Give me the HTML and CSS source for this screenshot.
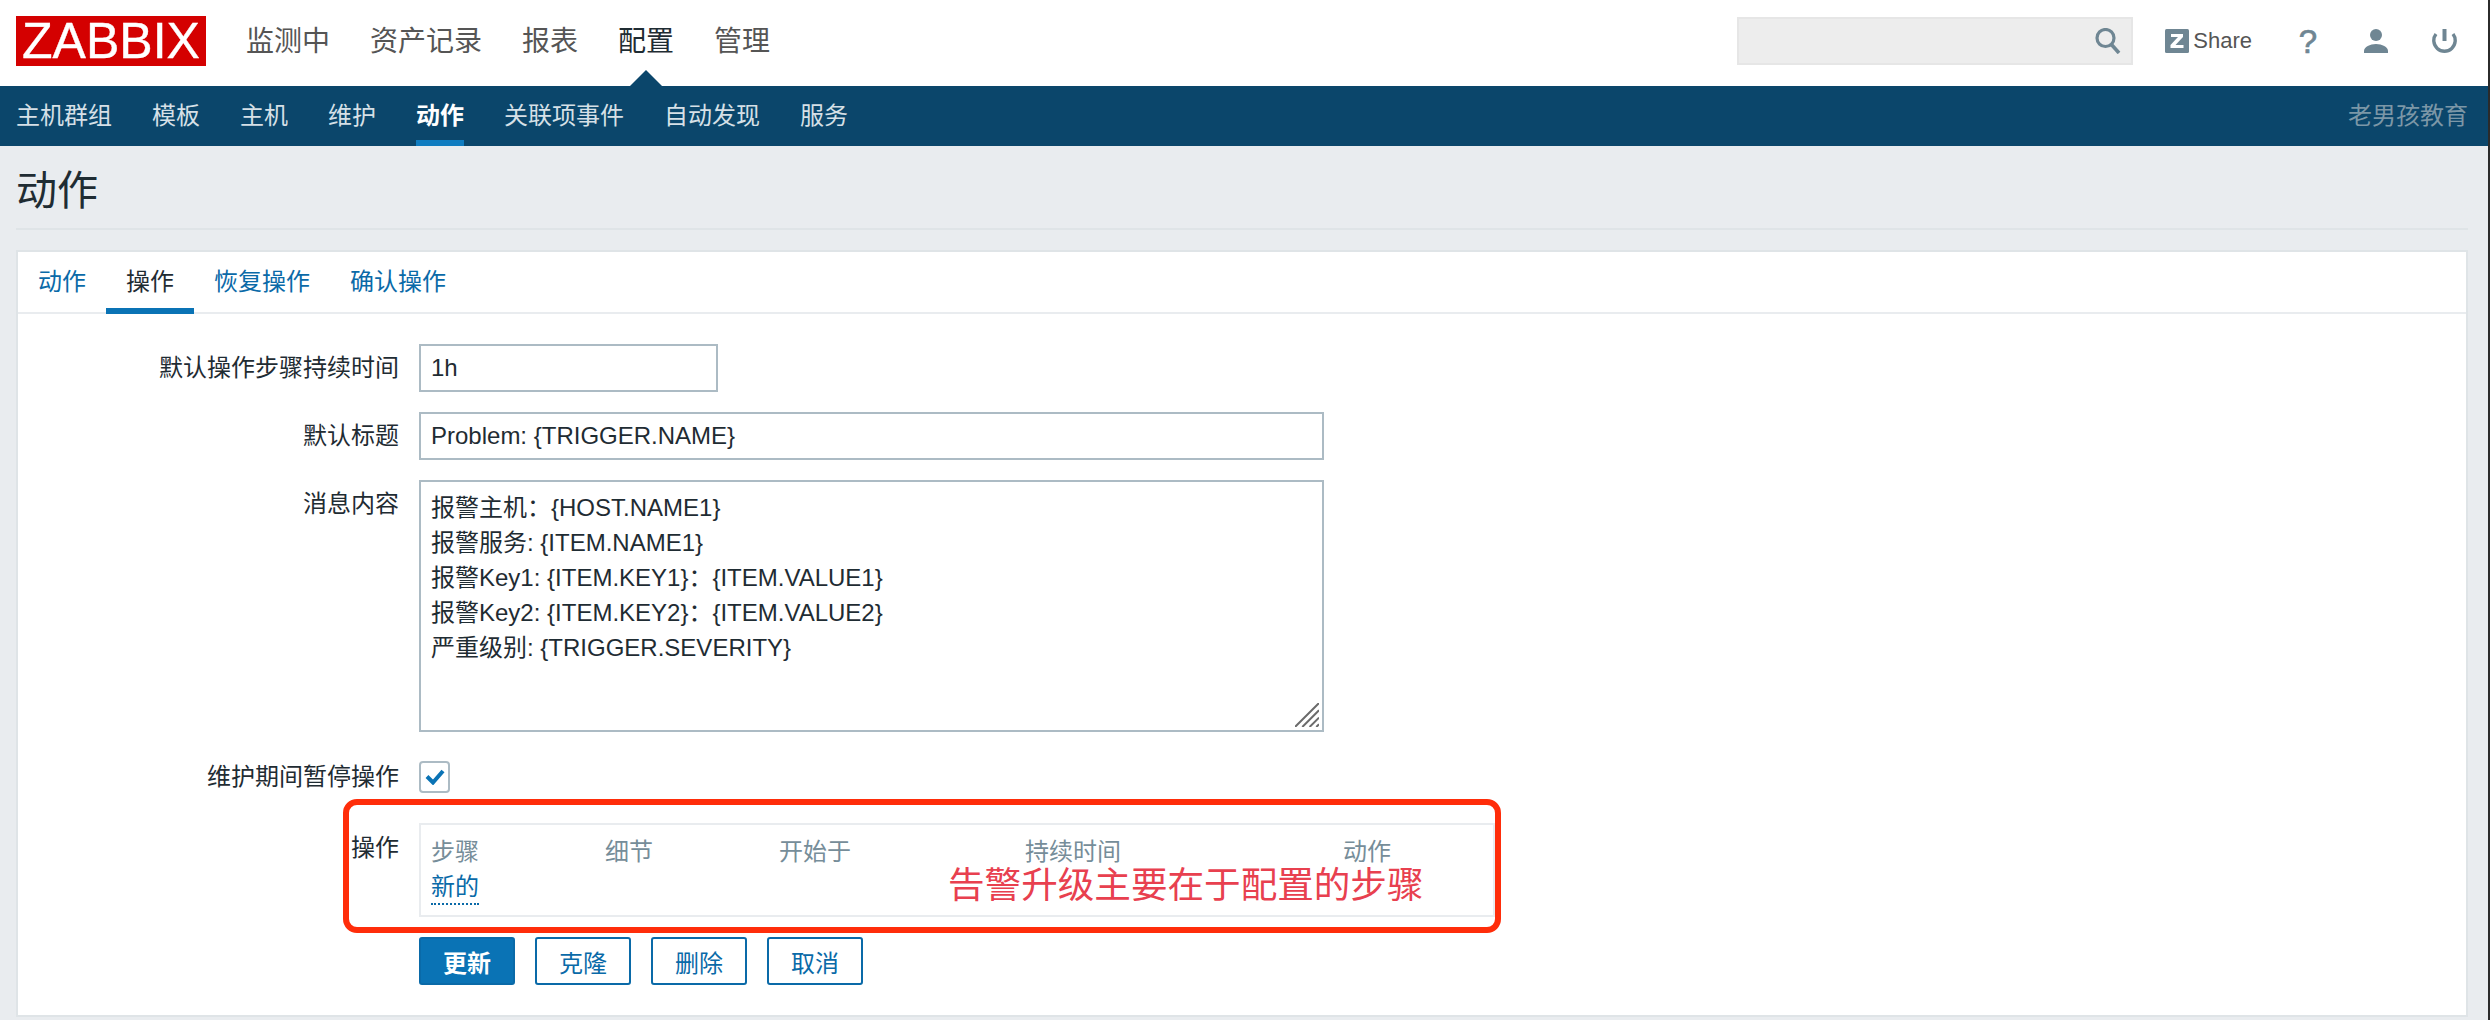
FILE: index.html
```html
<!DOCTYPE html>
<html lang="zh-CN">
<head>
<meta charset="utf-8">
<title>动作</title>
<link rel="stylesheet" href="styles.css">
</head>
<body>
<header class="topbar">
  <div class="logo">ZABBIX</div>
  <nav class="mainnav">
    <a>监测中</a><a>资产记录</a><a>报表</a><a class="active">配置</a><a>管理</a>
  </nav>
  <div class="tools">
    <div class="search">
      <svg class="ico-search" viewBox="0 0 26 26" width="26" height="26"><circle cx="10.500" cy="10" r="8.500" fill="none" stroke="#6f8693" stroke-width="3.200"/><path d="M16 16l8 9" stroke="#6f8693" stroke-width="3.600" fill="none"/></svg>
    </div>
    <div class="share">
      <svg viewBox="0 0 24 24" width="24" height="24"><rect width="24" height="24" rx="1.500" fill="#6f8693"/><path d="M6 5h12v3L10.500 16H18.500v3H5.500v-3L13 8H6z" fill="#fff"/></svg>
      <span>Share</span>
    </div>
    <div class="help">?</div>
    <svg class="ico-user" viewBox="0 0 24 24" width="24" height="24"><circle cx="12" cy="6" r="6" fill="#6f8693"/><path d="M0 24v-2C0 18 6 15 12 15s12 3 12 7v2z" fill="#6f8693"/></svg>
    <svg class="ico-power" viewBox="0 0 25 24" width="25" height="24"><path d="M4 5A10.700 10.700 0 1 0 21 5" fill="none" stroke="#6f8693" stroke-width="3.400"/><path d="M12.500 0v12" stroke="#6f8693" stroke-width="4" fill="none"/></svg>
  </div>
</header>
<div class="subnav">
  <nav class="subnav-links">
    <a>主机群组</a><a>模板</a><a>主机</a><a>维护</a><a class="active">动作</a><a>关联项事件</a><a>自动发现</a><a>服务</a>
  </nav>
  <div class="brand">老男孩教育</div>
</div>
<main class="page">
  <h1 class="title">动作</h1>
  <section class="card">
    <div class="tabs">
      <a>动作</a><a class="active">操作</a><a>恢复操作</a><a>确认操作</a>
    </div>
    <form class="form">
      <label class="lbl">默认操作步骤持续时间</label>
      <div class="field short">1h</div>
      <label class="lbl">默认标题</label>
      <div class="field wide">Problem: {TRIGGER.NAME}</div>
      <label class="lbl lbl-top">消息内容</label>
      <div class="field wide area">
        <div>报警主机：{HOST.NAME1}</div>
        <div>报警服务: {ITEM.NAME1}</div>
        <div>报警Key1: {ITEM.KEY1}：{ITEM.VALUE1}</div>
        <div>报警Key2: {ITEM.KEY2}：{ITEM.VALUE2}</div>
        <div>严重级别: {TRIGGER.SEVERITY}</div>
        <svg class="grip" viewBox="0 0 24 24" width="24" height="24"><path d="M0 24L24 0M7.300 24L24 7.300M14.600 24L24 14.600M21.300 24L24 21.300" stroke="#6b6b6b" stroke-width="2" fill="none"/></svg>
      </div>
      <label class="lbl lbl-check">维护期间暂停操作</label>
      <div class="check-row">
        <div class="check"><svg viewBox="0 0 20 16" width="20" height="16"><path d="M2 7.500l6 6L18 2" fill="none" stroke="#0a73b5" stroke-width="4"/></svg></div>
      </div>
      <label class="lbl lbl-ops">操作</label>
      <div class="ops">
        <div class="ops-head"><span class="c1">步骤</span><span class="c2">细节</span><span class="c3">开始于</span><span class="c4">持续时间</span><span class="c5">动作</span></div>
        <a class="new">新的</a>
        <div class="note">告警升级主要在于配置的步骤</div>
      </div>
      <div class="buttons">
        <button type="button" class="btn primary">更新</button>
        <button type="button" class="btn">克隆</button>
        <button type="button" class="btn">删除</button>
        <button type="button" class="btn">取消</button>
      </div>
    </form>
    <div class="callout"></div>
  </section>
</main>
</body>
</html>
```
FILE: styles.css
```css
* { box-sizing: border-box; }
html, body { margin: 0; height: 1020px; overflow: hidden; }
html { background: #2b2b2b; }
body {
  background: #e9ecef;
  font-family: "Liberation Sans", "Noto Sans CJK SC", sans-serif;
  font-size: 24px;
  color: #1f2c33;
  width: 2488px;
}
a { text-decoration: none; }

.topbar {
  height: 86px;
  background: #fff;
  display: flex;
  align-items: flex-start;
  padding-left: 16px;
}
.logo {
  width: 190px;
  height: 50px;
  margin-top: 16px;
  background: #d40000;
  color: #fff;
  font-size: 50px;
  line-height: 50px;
  text-align: center;
  -webkit-text-stroke: 0.4px #fff;
}
.mainnav {
  display: flex;
  gap: 40px;
  margin-left: 40px;
  margin-top: 22px;
  font-size: 28px;
  line-height: 40px;
  color: #555;
}
.mainnav a { position: relative; height: 64px; }
.mainnav a.active { color: #1f2c33; }
.mainnav a.active::after {
  content: "";
  position: absolute;
  left: 50%;
  bottom: 0;
  margin-left: -16px;
  border-left: 16px solid transparent;
  border-right: 16px solid transparent;
  border-bottom: 16px solid #0b466b;
}
.tools {
  margin-left: auto;
  display: flex;
  align-items: center;
  height: 82px;
  padding-right: 31px;
}
.search {
  width: 396px;
  height: 48px;
  background: #ededed;
  border: 2px solid #e6e6e6;
  display: flex;
  align-items: center;
  justify-content: flex-end;
  padding-right: 10px;
}
.share {
  display: flex;
  align-items: center;
  gap: 4px;
  margin-left: 32px;
  font-size: 22px;
  color: #555;
}
.help {
  margin-left: 46px;
  width: 20px;
  font-size: 33px;
  line-height: 33px;
  color: #6f8693;
  text-align: center;
  -webkit-text-stroke: 0.7px #6f8693;
}
.ico-user { margin-left: 46px; }
.ico-power { margin-left: 44px; }

.subnav {
  height: 60px;
  background: #0b466b;
  display: flex;
  justify-content: space-between;
  padding: 0 20px 0 16px;
  line-height: 59px;
  color: #dde6ec;
}
.subnav-links { display: flex; gap: 40px; }
.subnav-links a { height: 60px; color: #d6e0e7; }
.subnav-links a.active {
  color: #fff;
  font-weight: 700;
  border-bottom: 6px solid #0f7cc0;
}
.brand { color: #7c97a7; }

.page { padding: 0 20px 0 16px; }
.title {
  margin: 0;
  height: 84px;
  border-bottom: 2px solid #dfe4e7;
  font-size: 41px;
  font-weight: 400;
  line-height: 90px;
  color: #1f2c33;
}
.card {
  position: relative;
  margin-top: 20px;
  height: 767px;
  background: #fff;
  border: 2px solid #dfe4e7;
}
.tabs {
  display: flex;
  height: 62px;
  border-bottom: 2px solid #e9ecef;
  line-height: 59px;
}
.tabs a {
  padding: 0 20px;
  color: #0a6aa8;
  height: 62px;
}
.tabs a.active {
  color: #1f2c33;
  border-bottom: 6px solid #0a73b5;
}

.form {
  display: grid;
  grid-template-columns: 381px 1fr;
  column-gap: 20px;
  row-gap: 20px;
  padding-top: 30px;
  align-items: center;
}
.lbl { text-align: right; line-height: 32px; }
.lbl-top { align-self: start; margin-top: 8px; }
.lbl-ops { align-self: start; margin-top: 10px; }
.field {
  height: 48px;
  border: 2px solid #acbbc4;
  padding: 0 10px;
  line-height: 44px;
  background: #fff;
}
.short { width: 299px; }
.wide { width: 905px; }
.area {
  position: relative;
  height: 252px;
  padding-top: 9px;
  line-height: 34.900px;
}
.grip { position: absolute; right: 3px; bottom: 3px; }
.check-row { height: 50px; display: flex; align-items: center; }
.check {
  width: 31px;
  height: 32px;
  border: 2px solid #acbbc4;
  border-radius: 4px;
  display: flex;
  align-items: center;
  justify-content: center;
}
.ops {
  position: relative;
  width: 1076px;
  height: 94px;
  border: 2px solid #e9ecef;
  margin-top: 1px;
  padding: 9px 0 0 10px;
  line-height: 35px;
}
.ops-head { display: flex; color: #768d99; height: 35px; }
.c1 { width: 174px; }
.c2 { width: 174px; }
.c3 { width: 246px; }
.c4 { width: 318px; }
.new {
  color: #0a6aa8;
  border-bottom: 2px dotted #0a6aa8;
  display: inline-block;
  height: 36px;
}
.note {
  position: absolute;
  left: 527px;
  top: 36px;
  font-size: 36.600px;
  line-height: 50px;
  color: #e8404f;
  white-space: nowrap;
}
.buttons { grid-column: 2; display: flex; gap: 20px; }
.btn {
  width: 96px;
  height: 48px;
  border: 2px solid #0a6aa8;
  border-radius: 3px;
  background: #fff;
  color: #0a6aa8;
  font: inherit;
  padding: 0;
}
.btn.primary {
  background: #0a73b5;
  color: #fff;
  font-weight: 700;
}
.callout {
  position: absolute;
  left: 325px;
  top: 547px;
  width: 1158px;
  height: 134px;
  border: 6px solid #ff2d0a;
  border-radius: 14px;
  pointer-events: none;
}
```
